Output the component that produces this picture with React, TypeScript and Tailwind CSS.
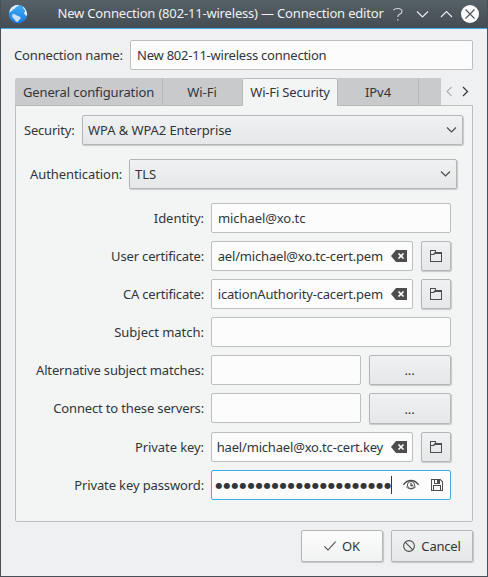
import React from "react";

const FIELD = "h-[30px] border border-[#bcbebf] rounded-[2px] bg-[#fcfcfc] flex items-center overflow-hidden";
const RAISED =
  "border border-[#b4b7b8] rounded-[2px] bg-linear-to-b from-[#f0f1f2] to-[#e6e7e8] shadow-[0.5px_1px_1px_rgba(0,0,0,0.18)] flex items-center shrink-0";

function Globe() {
  return (
    <svg width="20" height="20" viewBox="0 0 20 20">
      <defs>
        <linearGradient id="sea" x1="0" y1="0" x2="0" y2="1">
          <stop offset="0" stopColor="#3fb0f2" />
          <stop offset="1" stopColor="#1b78e2" />
        </linearGradient>
        <clipPath id="disc">
          <circle cx="10" cy="10" r="9.2" />
        </clipPath>
      </defs>
      <circle cx="10" cy="10" r="9.2" fill="url(#sea)" />
      <g clipPath="url(#disc)" fill="#e3eff8">
        <path d="M1 7.500 L2 4 L6 1 L10 0.5 L10.500 2 L8 3 L7 4.500 L5 5.500 L4 7 L2.500 7.500 L1 9Z" />
        <path fill="#c9e0f6" d="M4 10.500 L6.500 10 L8.500 11.300 L12.500 13 L12.500 15 L10.500 16.500 L10 18 L8 17.500 L6.500 15.500 L4.500 13.500Z" />
        <path d="M15 2 L16 3.500 L19.500 8 L19 12 L17.800 11.500 L17.200 10.500 L16 9.500 L16.500 8 L17.300 7 L16 5 L15 4Z" />
      </g>
    </svg>
  );
}

function Chevron({ d, w, h, color }: { d: string; w: number; h: number; color: string }) {
  return (
    <svg width={w} height={h} viewBox={`0 0 ${w} ${h}`} fill="none" stroke={color} strokeWidth="1.2">
      <path d={d} />
    </svg>
  );
}

function Combo({ text, className }: { text: string; className: string }) {
  return (
    <div className={`${RAISED} h-[30px] justify-between px-[5px] ${className}`}>
      <span className="pt-0.5">{text}</span>
      <Chevron d="M1 1.5 L5.5 6 L10 1.5" w={11} h={8} color="#4d4d4d" />
    </div>
  );
}

function Backspace() {
  return (
    <svg width="16" height="12" viewBox="0 0 16 12" className="shrink-0">
      <path d="M5 0 H16 V12 H5 L0 6Z" fill="#4d4d4d" />
      <path d="M7.5 3.5 L12.5 8.5 M12.5 3.5 L7.5 8.5" stroke="#fcfcfc" strokeWidth="1.7" />
    </svg>
  );
}

function FolderButton() {
  return (
    <div className={`${RAISED} ml-2 h-[30px] w-[30px] justify-center`}>
      <svg width="12" height="12" viewBox="0 0 12 12" fill="#4d4d4d">
        <path d="M0 0 H6 V2 H12 V12 H0Z M1 5 V11 H11 V4 H5 L4 5Z M1 1 V4 H3 L5 2 V1Z" fillRule="evenodd" />
      </svg>
    </div>
  );
}

function Row({ label, tracking, children }: { label: string; tracking: string; children: React.ReactNode }) {
  return (
    <div className="flex">
      <div className={`w-[188px] shrink-0 text-right leading-[30px] ${tracking}`}>{label}</div>
      <div className="ml-[7px] flex w-[240px] shrink-0 items-start">{children}</div>
    </div>
  );
}

function FileField({ text }: { text: string }) {
  return (
    <>
      <div className={`${FIELD} w-[202px] shrink-0 justify-end pr-[5px]`}>
        <span className="mr-2 pt-0.5 tracking-[-0.18px] whitespace-nowrap">{text}</span>
        <Backspace />
      </div>
      <FolderButton />
    </>
  );
}

function ListField({ tall = false }: { tall?: boolean }) {
  return (
    <>
      <div className={`${FIELD} w-[150px] shrink-0`} />
      <div className={`${RAISED} ml-2 w-[82px] justify-center ${tall ? "h-[31px]" : "h-[30px]"}`}>
        <span className="pt-0.5 pr-px">...</span>
      </div>
    </>
  );
}

export default function App() {
  return (
    <div className="flex h-[577px] w-[488px] flex-col overflow-hidden border border-t-0 border-[#475057] bg-[#eff0f1] font-['Noto_Sans',sans-serif] text-[13px] tracking-[-0.08px] whitespace-nowrap text-[#31363b]">
      <div className="flex h-[29px] shrink-0 items-center border-b border-[#3daee9] bg-linear-to-b from-[#566067] to-[#454d54] pl-[7px] text-[#eff0f1]">
        <Globe />
        <span className="ml-[29.5px] w-[327.5px] tracking-[-0.18px]">New Connection (802-11-wireless) — Connection editor</span>
        <svg width="98" height="28" viewBox="0 0 98 28" fill="none" stroke="#eff0f1" strokeWidth="1.1" className="ml-[3px]">
          <path d="M5.5 10 Q7 8.5 9.5 8.5 Q14 8.5 14 11.5 Q14 13.3 11.5 14.2 Q9.8 15 9.8 17 M9.8 19 V20.5" stroke="#d5d8da" />
          <path d="M29 11.5 L34.5 17 L40 11.5 M53 17 L58.5 11.5 L64 17" />
          <circle cx="82" cy="14" r="9" fill="#fcfcfc" stroke="none" />
          <path d="M77.5 9.5 L86.5 18.5 M86.5 9.5 L77.5 18.5" stroke="#4d565d" strokeWidth="1.2" />
        </svg>
      </div>

      <div className="mt-[11px] flex pr-[14px] pl-[13px]">
        <div className="w-[116px] leading-[30px] tracking-[-0.16px]">Connection name:</div>
        <div className={`${FIELD} w-[343px] pl-[6px]`}>
          <span className="pt-0.5 tracking-[-0.23px]">New 802-11-wireless connection</span>
        </div>
      </div>

      <div className="z-10 mt-2 -mb-px ml-[14px] flex h-[28px] shrink-0 text-center leading-[29px]">
        <div className="w-[148px] rounded-tl-[2px] border-r border-b border-[#b7b9ba] bg-[#c9cacb] tracking-[-0.12px]">General configuration</div>
        <div className="w-[79px] border-b border-[#b7b9ba] bg-[#c9cacb] pr-px">Wi-Fi</div>
        <div className="w-[96px] rounded-t-[2px] border border-b-0 border-[#b7b9ba] bg-[#f3f4f4] leading-[26px] tracking-[-0.17px]">Wi-Fi Security</div>
        <div className="w-[81px] border-r border-b border-[#b7b9ba] bg-[#c9cacb]">IPv4</div>
        <div className="w-[22px] border-b border-[#b7b9ba] bg-[#c9cacb]" />
        <div className="ml-[5px] flex h-[27px] items-center gap-[9px]">
          <Chevron d="M5.5 1 L1 5.5 L5.5 10" w={7} h={11} color="#b0b2b4" />
          <Chevron d="M1 1 L5.5 5.5 L1 10" w={7} h={11} color="#31363b" />
        </div>
      </div>

      <div className="ml-[14px] h-[417px] w-[458px] shrink-0 rounded-b-[2px] border border-[#bcbebf] bg-[#f3f4f4] pt-[9px]">
        <div className="flex">
          <div className="w-[66px] pl-2 leading-[30px] tracking-[-0.2px]">Security:</div>
          <Combo text="WPA & WPA2 Enterprise" className="w-[381px]" />
        </div>
        <div className="mt-[14px] flex">
          <div className="w-[113px] pl-[14px] leading-[30px]">Authentication:</div>
          <Combo text="TLS" className="w-[328px]" />
        </div>
        <div className="mt-[14px] flex flex-col gap-2">
          <Row label="Identity:" tracking="tracking-[-0.05px]">
            <div className={`${FIELD} w-full pl-[6px]`}>
              <span className="pt-0.5">michael@xo.tc</span>
            </div>
          </Row>
          <Row label="User certificate:" tracking="tracking-[-0.16px]">
            <FileField text="ael/michael@xo.tc-cert.pem" />
          </Row>
          <Row label="CA certificate:" tracking="tracking-[-0.18px]">
            <FileField text="icationAuthority-cacert.pem" />
          </Row>
          <Row label="Subject match:" tracking="tracking-[-0.02px]">
            <div className={`${FIELD} w-full`} />
          </Row>
          <Row label="Alternative subject matches:" tracking="tracking-[-0.16px]">
            <ListField />
          </Row>
          <div className="h-[31px]">
            <Row label="Connect to these servers:" tracking="tracking-[-0.16px]">
              <ListField tall />
            </Row>
          </div>
          <Row label="Private key:" tracking="tracking-[-0.08px]">
            <FileField text="hael/michael@xo.tc-cert.key" />
          </Row>
          <Row label="Private key password:" tracking="tracking-[-0.12px]">
            <div className="flex h-[30px] w-full items-center rounded-[2px] border border-[#3daee9] bg-[#fcfcfc] pl-[3.5px]">
              <span className="w-[175.5px] shrink-0 pt-px font-['DejaVu_Sans',sans-serif] text-[8px] tracking-[1.06px]">
                ●●●●●●●●●●●●●●●●●●●●●●
              </span>
              <span className="h-[18px] w-px shrink-0 bg-[#31363b]" />
              <svg width="16" height="12" viewBox="0 0 16 12" className="ml-[11px] shrink-0" fill="none" stroke="#4d4d4d">
                <path d="M0.4 5.8 Q3.5 1.5 8 1.5 Q12.500 1.500 15.6 5.800" strokeWidth="1.3" />
                <circle cx="8" cy="6" r="3.6" strokeWidth="1" />
                <path d="M3 7.5 Q5 10 8 10 Q11 10 13 7.500" strokeWidth="0.8" />
                <path d="M8 4 V6.5 H10" strokeWidth="1.3" />
              </svg>
              <svg width="12" height="12" viewBox="0 0 12 12" className="ml-3 shrink-0" fill="#4d4d4d">
                <path fillRule="evenodd" d="M0 0 H9.500 L12 2.500 V12 H0Z M1 1 V11 H2 V6 H10 V11 H11 V3 L9 1 V5 H3 V1Z M4 1 V4 H6 V1Z M3 7 V11 H9 V7Z" />
              </svg>
            </div>
          </Row>
        </div>
      </div>

      <div className="mt-2 flex justify-end gap-2 pr-[14px]">
        <div className="flex h-8 w-[82px] items-center justify-center rounded-[2px] border border-[#b4b7b8] bg-linear-to-b from-[#fcfcfc] to-[#f1f2f2] shadow-[0.5px_1px_1px_rgba(0,0,0,0.18)]">
          <svg width="12" height="10" viewBox="0 0 12 10" fill="none" stroke="#4d4d4d" strokeWidth="1.1" className="mr-[6px]">
            <path d="M0.4 5.4 L4 9 L11.6 0.6" />
          </svg>
          <span className="pt-0.5">OK</span>
        </div>
        <div className={`${RAISED} h-8 w-[82px] justify-center`}>
          <svg width="12" height="12" viewBox="0 0 12 12" fill="none" stroke="#4d4d4d" strokeWidth="1.1" className="mr-[6px]">
            <circle cx="6" cy="6" r="5.4" />
            <path d="M2.200 2.200 L9.800 9.800" />
          </svg>
          <span className="pt-0.5 tracking-[-0.2px]">Cancel</span>
        </div>
      </div>
    </div>
  );
}
